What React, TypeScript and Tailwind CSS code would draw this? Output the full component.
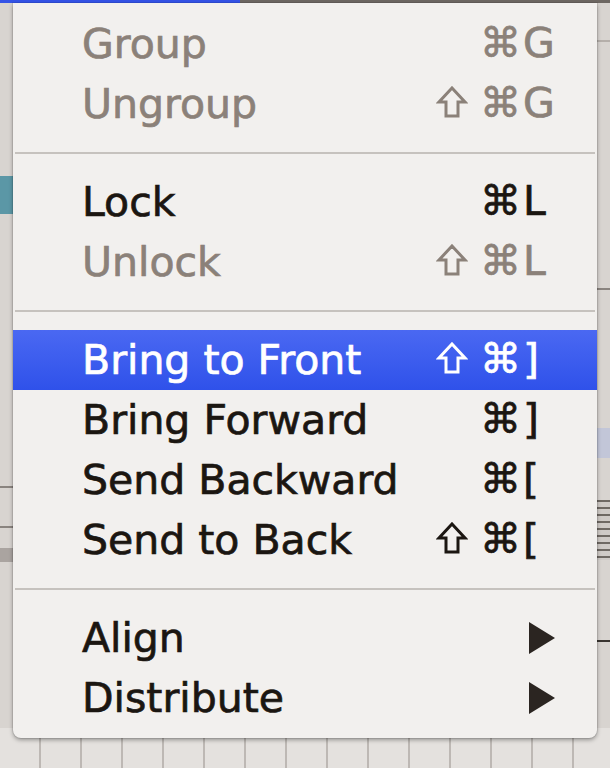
import React from 'react'

type Item =
  | { kind: 'sep' }
  | { kind: 'item'; label: string; shift?: boolean; keyChar?: string; disabled?: boolean; active?: boolean; submenu?: boolean }

const items: Item[] = [
  { kind: 'item', label: 'Group', keyChar: 'G', disabled: true },
  { kind: 'item', label: 'Ungroup', shift: true, keyChar: 'G', disabled: true },
  { kind: 'sep' },
  { kind: 'item', label: 'Lock', keyChar: 'L' },
  { kind: 'item', label: 'Unlock', shift: true, keyChar: 'L', disabled: true },
  { kind: 'sep' },
  { kind: 'item', label: 'Bring to Front', shift: true, keyChar: ']', active: true },
  { kind: 'item', label: 'Bring Forward', keyChar: ']' },
  { kind: 'item', label: 'Send Backward', keyChar: '[' },
  { kind: 'item', label: 'Send to Back', shift: true, keyChar: '[' },
  { kind: 'sep' },
  { kind: 'item', label: 'Align', submenu: true },
  { kind: 'item', label: 'Distribute', submenu: true },
]

function Arrow() {
  return (
    <svg width="28" height="32" viewBox="0 0 28 32" className="block">
      <polygon points="1,0 27,16 1,32" fill="#2b2521" />
    </svg>
  )
}

// outlined shift arrow, drawn since the font's glyph is too thin
function ShiftIcon() {
  return (
    <svg width="32" height="32" viewBox="0 0 32 32" className="block">
      <path
        d="M16 2 L29 16 L22 16 L22 30 L10 30 L10 16 L3 16 Z"
        fill="none"
        stroke="currentColor"
        strokeWidth="3"
        strokeLinejoin="miter"
      />
    </svg>
  )
}

function Row({ item }: { item: Extract<Item, { kind: 'item' }> }) {
  const color = item.active
    ? 'text-white'
    : item.disabled
      ? 'text-[#8b8179]'
      : 'text-[#1b1611]'

  return (
    <div
      className={`flex h-[60px] items-center pl-[69px] pr-[39px] ${color} ${
        item.active ? 'bg-gradient-to-b from-[#4a68f2] to-[#2f51ea]' : ''
      }`}
    >
      <span className="flex-1 leading-[60px] whitespace-nowrap">{item.label}</span>
      {item.submenu ? (
        <div className="mr-[2px]">
          <Arrow />
        </div>
      ) : (
        <div className="flex items-center">
          {item.shift && (
            <span className="mr-[12px] mt-[-4px]">
              <ShiftIcon />
            </span>
          )}
          <span>⌘</span>
          <span className="w-[37px] pl-[2px]">{item.keyChar}</span>
        </div>
      )}
    </div>
  )
}

export default function App() {
  return (
    <div className="relative h-[768px] w-[610px] overflow-hidden bg-[#d8d4d0] font-['DejaVu_Sans',sans-serif] text-[41px] [-webkit-text-stroke:0.7px_currentColor]">
      {/* backdrop bits behind the menu */}
      <div className="absolute left-0 top-0 h-[3px] w-[240px] bg-[#3453e6]" />
      <div className="absolute left-[240px] top-0 h-[3px] w-[370px] bg-[#6d6762]" />
      <div className="absolute left-0 top-[176px] h-[38px] w-[14px] bg-[#5b97a6]" />
      <div className="absolute left-0 top-[486px] h-[2px] w-[14px] bg-[#8a847f]" />
      <div className="absolute left-0 top-[526px] h-[2px] w-[14px] bg-[#8a847f]" />
      <div className="absolute left-0 top-[548px] h-[14px] w-[14px] bg-[#aaa4a0]" />
      <div className="absolute right-0 top-[40px] h-[2px] w-[14px] bg-[#b5afaa]" />
      <div className="absolute right-0 top-[288px] h-[2px] w-[14px] bg-[#8a847f]" />
      <div className="absolute right-0 top-[428px] h-[30px] w-[14px] bg-[#c2c6d8]" />
      <div className="absolute right-0 top-[500px] h-[60px] w-[14px] bg-[repeating-linear-gradient(180deg,#6f6963_0,#6f6963_2px,#cfcac6_2px,#cfcac6_7px)]" />
      <div className="absolute right-0 top-[640px] h-[2px] w-[14px] bg-[#3a3531]" />
      <div className="absolute bottom-0 left-0 h-[40px] w-full bg-[repeating-linear-gradient(90deg,#e4e1de_0,#e4e1de_39px,#bdb8b4_39px,#bdb8b4_41px)]" />

      {/* menu */}
      <div className="relative ml-[13px] mt-[3px] w-[584px] rounded-b-[8px] bg-[#f2f0ee] pb-[10px] pt-[11px] shadow-[0_2px_4px_rgba(0,0,0,0.35),0_0_0_1px_rgba(0,0,0,0.08)]">
        {items.map((item, i) =>
          item.kind === 'sep' ? (
            <div key={i} className="flex h-[38px] items-center px-[2px]">
              <div className="h-[2px] w-full bg-[#c6c2be]" />
            </div>
          ) : (
            <Row key={i} item={item} />
          ),
        )}
      </div>
    </div>
  )
}
